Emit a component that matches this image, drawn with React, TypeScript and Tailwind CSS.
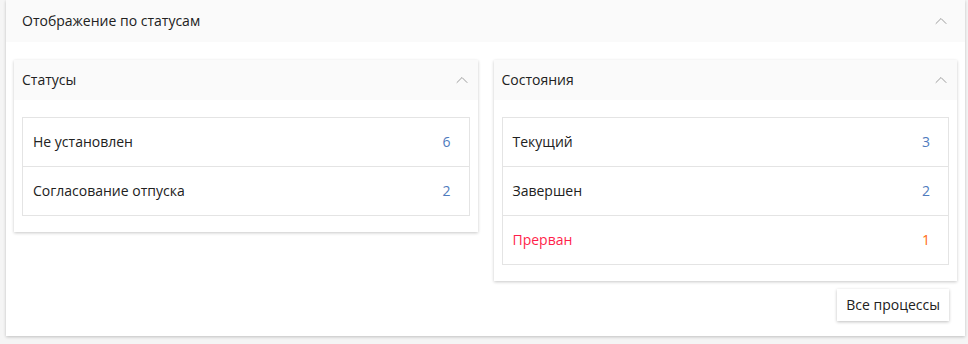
import { ChevronUp } from "lucide-react";

type Row = { label: string; count: number; alert?: boolean };

const statuses: Row[] = [
  { label: "Не установлен", count: 6 },
  { label: "Согласование отпуска", count: 2 },
];

const states: Row[] = [
  { label: "Текущий", count: 3 },
  { label: "Завершен", count: 2 },
  { label: "Прерван", count: 1, alert: true },
];

function Chevron() {
  return <ChevronUp className="h-5 w-5 text-[#9e9e9e]" strokeWidth={1.2} />;
}

function StatCard({ title, rows }: { title: string; rows: Row[] }) {
  return (
    <section className="flex-1 bg-white shadow-[0_1px_3px_rgba(0,0,0,0.22)]">
      <div className="flex h-10 items-center justify-between bg-[#fafafa] pl-2 pr-[6px]">
        <span className="text-sm text-[#212121]">{title}</span>
        <Chevron />
      </div>
      <div className="px-2 pt-[17px] pb-4">
        <ul className="border border-[#e4e4e4]">
          {rows.map((r, i) => (
            <li
              key={r.label}
              className={`box-content flex h-12 items-center justify-between pl-[10px] pr-[18px] text-sm ${
                i > 0 ? "border-t border-[#e4e4e4]" : ""
              }`}
            >
              <span className={r.alert ? "text-[#ff1f4b]" : "text-[#212121]"}>{r.label}</span>
              <span className={r.alert ? "text-[#ff6a13]" : "text-[#4f7bbd]"}>{r.count}</span>
            </li>
          ))}
        </ul>
      </div>
    </section>
  );
}

export default function App() {
  return (
    <div className="min-h-screen bg-[#f5f5f5] pl-[6px] font-['Open_Sans',sans-serif]">
      <div className="w-[959px] bg-white shadow-[0_1px_3px_rgba(0,0,0,0.22)]">
        <div className="flex h-[42px] items-center justify-between bg-[#fafafa] pl-4 pr-[14px]">
          <span className="text-sm text-[#212121]">Отображение по статусам</span>
          <Chevron />
        </div>
        <div className="px-2 pt-[18px] pb-[15px]">
          <div className="flex items-start gap-4">
            <StatCard title="Статусы" rows={statuses} />
            <StatCard title="Состояния" rows={states} />
          </div>
          <div className="mt-2 flex justify-end pr-2">
            <button className="h-8 bg-white px-[9px] text-sm text-[#212121] shadow-[0_1px_3px_rgba(0,0,0,0.25)]">
              Все процессы
            </button>
          </div>
        </div>
      </div>
    </div>
  );
}
